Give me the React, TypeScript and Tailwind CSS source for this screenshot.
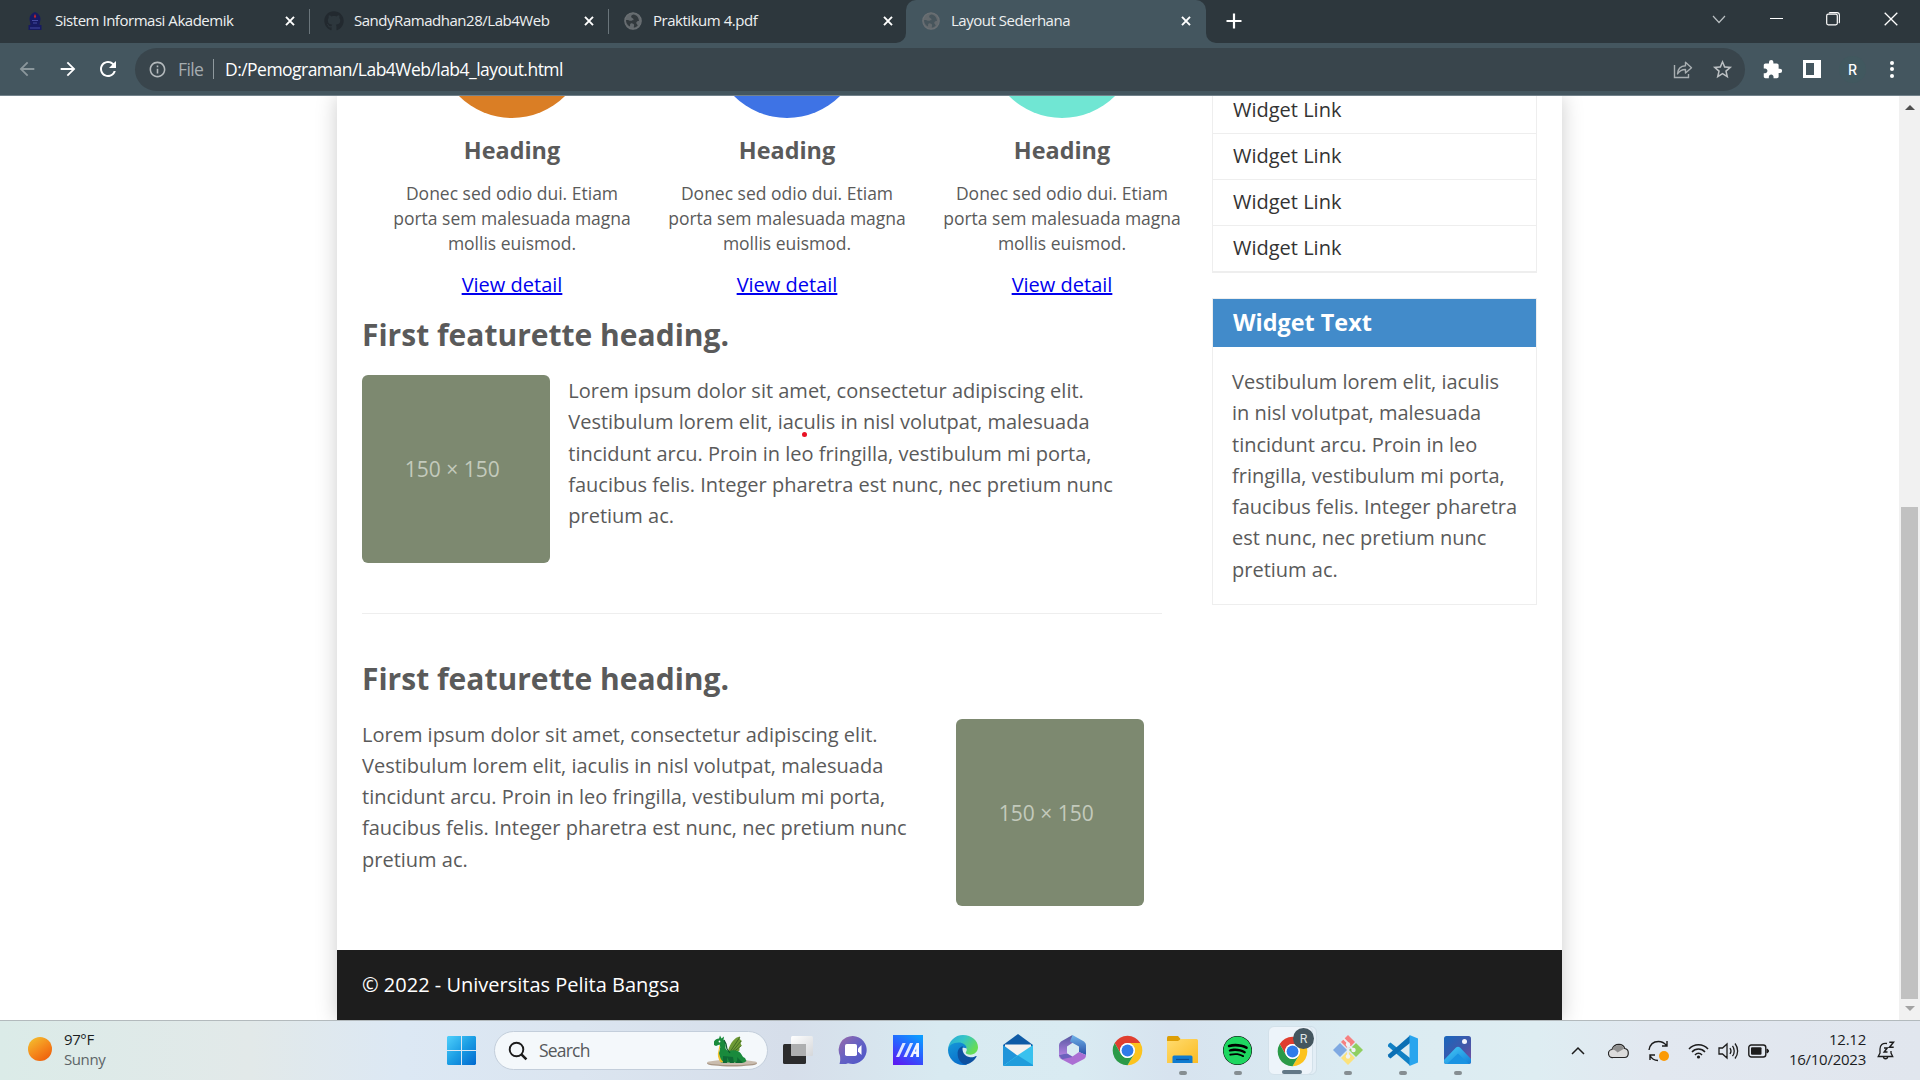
import React from "react";
import { MdExtension, MdStarBorder, MdInfoOutline, MdRefresh, MdArrowBack, MdArrowForward } from "react-icons/md";
import { FaGithub, FaSpotify } from "react-icons/fa";

const LOREM =
  "Lorem ipsum dolor sit amet, consectetur adipiscing elit. Vestibulum lorem elit, iaculis in nisl volutpat, malesuada tincidunt arcu. Proin in leo fringilla, vestibulum mi porta, faucibus felis. Integer pharetra est nunc, nec pretium nunc pretium ac.";

/* ---------- Browser chrome ---------- */

function Globe({ land }: { land: string }) {
  return (
    <svg className="h-[18px] w-[18px]" viewBox="0 0 18 18">
      <circle cx="9" cy="9" r="8.2" fill="#63696d" stroke="#6b7074" strokeWidth="1.2" />
      <path
        d="M9.5 2.5c-2 .3-2.6 1.6-2.2 2.8.4 1.1 2 .8 2.2 2 .2 1.3-1.2 1.5-2.7 1.4C5 8.6 3.500 7.600 2 8c0 3 1.500 5.500 4 6.600.2-1.300-.3-2.500.8-3.100 1.200-.6 3.100.3 3.300 1.600.1.900-.4 1.600-.3 2.500 1.400-.3 3-1.100 4-2.200-.5-1-1.700-1.500-1.500-2.900.2-1.200 1.400-1.700 2.700-1.600C14.800 5.500 12.500 2.800 9.500 2.500z"
        fill={land}
      />
    </svg>
  );
}

function Campus() {
  return (
    <svg className="h-5 w-4" viewBox="0 0 16 20">
      <path d="M8 1c3.500 1.500 5.500 4 5.500 7L12.500 14h2v5H1.500v-5h2L2.500 8C2.500 5 4.500 2.500 8 1z" fill="#171a62" />
      <path d="M8 3l1.200 2.500L8 7.500 6.800 5.500z" fill="#c3242c" />
      <path d="M5 9.500h6M6 12h4M3 17h10" stroke="#454aa0" strokeWidth="1" />
    </svg>
  );
}

function CloseX() {
  return (
    <svg className="h-[10px] w-[10px]" viewBox="0 0 10 10">
      <path d="M1 .8l8 8.400M9 .8L1 9.200" stroke="#fff" strokeWidth="1.900" />
    </svg>
  );
}

function Tab({ icon, title }: { icon: React.ReactNode; title: string }) {
  return (
    <>
      <span className="flex w-5 justify-center">{icon}</span>
      <span className="ml-[10px] flex-1 pb-[2px] text-[15px] tracking-[-0.47px] whitespace-nowrap text-[#eef0f1]">{title}</span>
      <CloseX />
    </>
  );
}

function TabStrip() {
  return (
    <div className="flex h-[43px] bg-[#2d373d] pl-[10px]">
      <div className="flex h-[42px] w-[299px] items-center pr-[14px] pl-[15px]">
        <Tab icon={<Campus />} title="Sistem Informasi Akademik" />
      </div>
      <div className="mt-[9px] h-[25px] w-px bg-[#6a757b]" />
      <div className="flex h-[42px] w-[298px] items-center pr-[14px] pl-[14px]">
        <Tab icon={<FaGithub className="h-5 w-5 text-[#22292f]" />} title="SandyRamadhan28/Lab4Web" />
      </div>
      <div className="mt-[9px] h-[25px] w-px bg-[#6a757b]" />
      <div className="flex h-[42px] w-[287px] items-center pr-[3px] pl-[14px]">
        <Tab icon={<Globe land="#32393d" />} title="Praktikum 4.pdf" />
      </div>
      <div className="flex w-[10px] items-end bg-[#44565f]">
        <div className="h-full w-[10px] rounded-br-[10px] bg-[#2d373d]" />
      </div>
      <div className="flex h-[43px] w-[300px] items-center rounded-t-[10px] bg-[#44565f] pr-[15px] pb-px pl-[15px]">
        <Tab icon={<Globe land="#47555c" />} title="Layout Sederhana" />
      </div>
      <div className="w-[10px] bg-[#44565f]">
        <div className="h-full w-[10px] rounded-bl-[10px] bg-[#2d373d]" />
      </div>
      <svg className="mt-[13px] ml-[10px] h-4 w-4" viewBox="0 0 16 16">
        <path d="M8 .5v15M.5 8h15" stroke="#fff" strokeWidth="2.200" />
      </svg>
      <div className="flex flex-1 items-center justify-end pr-[22px] pb-[6px]">
        <svg className="mr-[44px] h-[14px] w-[14px]" viewBox="0 0 14 14">
          <path d="M1 4l6 6.500L13 4" fill="none" stroke="#b9bfc2" strokeWidth="1.200" />
        </svg>
        <div className="mr-[43px] h-px w-[13px] bg-white" />
        <svg className="mr-[44px] h-[14px] w-[14px]" viewBox="0 0 14 14">
          <rect x=".7" y="2.200" width="10.600" height="10.600" rx="1.500" fill="none" stroke="#fff" strokeWidth="1.200" />
          <path d="M3 1c.3-.3.700-.4 1.200-.4H11c1.400 0 2.400 1 2.400 2.400V10c0 .5-.2.900-.5 1.200" fill="none" stroke="#fff" strokeWidth="1.100" />
        </svg>
        <svg className="h-[14px] w-[14px]" viewBox="0 0 14 14">
          <path d="M.7.7l12.600 12.600M13.300.7L.7 13.300" stroke="#fff" strokeWidth="1.300" />
        </svg>
      </div>
    </div>
  );
}

function Toolbar() {
  return (
    <div className="flex h-[53px] items-center border-b border-[#72828b] bg-[#44565f] text-white">
      <MdArrowBack className="ml-[16px] h-[22px] w-[22px] text-[#8b979c]" />
      <MdArrowForward className="ml-[19px] h-[22px] w-[22px]" />
      <MdRefresh className="ml-[17px] h-6 w-6" />
      <div className="ml-[15px] flex h-[43px] w-[1610px] items-center rounded-full bg-[#39454c] pl-[13px] text-[17.5px]">
        <MdInfoOutline className="h-[19px] w-[19px] text-[#b4babd]" />
        <span className="ml-[11px] w-[35px] tracking-[-0.6px] text-[#a5acb0]">File</span>
        <div className="h-5 w-px bg-[#8f999e]" />
        <span className="ml-[11px] tracking-[-0.53px]">D:/Pemograman/Lab4Web/lab4_layout.html</span>
        <svg className="mr-[18px] ml-auto h-5 w-5" viewBox="0 0 20 20" fill="none" stroke="#a9afb2" strokeWidth="1.400">
          <path d="M1.500 6v12.500h14V15" />
          <path d="M4.500 15c.3-5 3-8 8-8.200V3.200l6 5.500-6 5.300v-3.500c-3.500 0-6 1.200-8 4.500z" strokeLinejoin="round" />
        </svg>
        <MdStarBorder className="mr-[11px] h-[23px] w-[23px] text-[#bcc0c3]" />
      </div>
      <MdExtension className="ml-[17px] h-[21px] w-[21px]" />
      <div className="ml-[20px] flex h-[18px] w-[18px] justify-end border-[3px] border-white">
        <div className="h-full w-[4px] bg-white" />
      </div>
      <div className="ml-[18px] flex h-[27px] w-[27px] items-center justify-center rounded-full bg-[#41585f] text-[14px] font-medium [font-family:Inter,sans-serif]">R</div>
      <div className="ml-[24px] flex flex-col gap-[2.500px]">
        <i className="h-1 w-1 rounded-full bg-white" />
        <i className="h-1 w-1 rounded-full bg-white" />
        <i className="h-1 w-1 rounded-full bg-white" />
      </div>
    </div>
  );
}

/* ---------- Page ---------- */

function Column({ disc }: { disc: string }) {
  return (
    <div className="flex w-[250px] shrink-0 flex-col items-center text-center">
      <div className={"-mt-[128px] h-[150px] w-[150px] shrink-0 rounded-full " + disc} />
      <h3 className="mt-[17px] h-[31px] text-[23.4px] leading-[31px] font-bold">Heading</h3>
      <p className="mt-[15px] text-[17.5px] leading-[25px]">Donec sed odio dui. Etiam porta sem malesuada magna mollis euismod.</p>
      <a className="mt-[13px] h-[31px] leading-[31px] text-[#0000ee] underline">View detail</a>
    </div>
  );
}

function Placeholder() {
  return (
    <div className="flex h-[187.5px] w-[187.5px] shrink-0 items-center justify-center rounded-[6px] bg-[#7d8970] pt-[2px] pr-[7px] text-[21px] text-[#c3cabc]">
      150 × 150
    </div>
  );
}

function Page() {
  return (
    <div className="flex h-[924px] overflow-hidden bg-white">
      <div className="flex flex-1 justify-center overflow-hidden">
        <div className="flex w-[1225px] flex-col bg-white text-[20px] text-[#5a5a5a] shadow-[0_0_20px_#ccc]">
          <div className="flex h-[854px] overflow-hidden pl-[25px]">
            <div className="flex w-[800px] shrink-0 flex-col">
              <div className="flex gap-[25px] pl-[25px]">
                <Column disc="bg-[#da7e25]" />
                <Column disc="bg-[#3e73e5]" />
                <Column disc="bg-[#70e6d3]" />
              </div>
              <h2 className="mt-[15px] h-10 text-[30px] leading-10 font-bold">First featurette heading.</h2>
              <div className="relative mt-[20px] flex gap-[18.75px]">
                <Placeholder />
                <p className="w-[580px] leading-[31.25px]">{LOREM}</p>
                <i className="absolute top-[57px] left-[440px] h-[5px] w-[5px] rounded-full bg-[#e81224]" />
              </div>
              <div className="mt-[50.5px] h-px shrink-0 bg-[#eee]" />
              <h2 className="mt-[45px] h-10 text-[30px] leading-10 font-bold">First featurette heading.</h2>
              <div className="mt-[19.6px] flex">
                <p className="w-[594px] leading-[31.25px]">{LOREM}</p>
                <Placeholder />
              </div>
            </div>
            <div className="ml-[50px] flex w-[325px] shrink-0 flex-col">
              <div className="-mt-[9px] border border-b-2 border-[#eee] text-[#333]">
                {[0, 1, 2, 3].map((i) => (
                  <div key={i} className="h-[46px] border-b border-[#eee] pl-[20px] leading-[43px] last:h-[45px] last:border-b-0">
                    Widget Link
                  </div>
                ))}
              </div>
              <div className="mt-[25px] h-[307px] border border-[#eee]">
                <h3 className="h-[48px] bg-[#428bca] pl-[20px] text-[23.4px] leading-[47px] font-bold text-white">Widget Text</h3>
                <p className="mt-[19px] w-[305px] pl-[19px] leading-[31.25px]">
                  {LOREM.slice(LOREM.indexOf("Vestibulum"))}
                </p>
              </div>
            </div>
          </div>
          <div className="h-[70px] bg-[#1d1d1d] pl-[25px] leading-[70px] text-white">© 2022 - Universitas Pelita Bangsa</div>
        </div>
      </div>
      <div className="flex w-[21px] flex-col items-center bg-[#f1f1f1]">
        <div className="mt-[9px] border-x-[5px] border-b-[5px] border-x-transparent border-b-[#505050]" />
        <div className="mt-[397px] h-[492px] w-[17px] bg-[#c1c1c1]" />
        <div className="mt-[7px] border-x-[5px] border-t-[5px] border-x-transparent border-t-[#a3a3a3]" />
      </div>
    </div>
  );
}

/* ---------- Taskbar ---------- */

function WindowsLogo() {
  return (
    <svg className="h-[29px] w-[29px]" viewBox="0 0 29 29">
      <defs>
        <linearGradient id="win" x1="0" y1="0" x2="1" y2="1">
          <stop offset="0" stopColor="#4fd0fb" />
          <stop offset=".5" stopColor="#1b9de4" />
          <stop offset="1" stopColor="#0169cf" />
        </linearGradient>
      </defs>
      <path d="M1 0h13v14H0V1zM15 0h13l1 1v13H15zM0 15h14v14H1l-1-1zM15 15h14v13l-1 1H15z" fill="url(#win)" />
    </svg>
  );
}

function Dragon() {
  return (
    <svg className="h-[32px] w-[52px]" viewBox="0 0 52 32">
      <ellipse cx="26" cy="28.500" rx="25" ry="3" fill="#a79584" />
      <ellipse cx="26" cy="27.500" rx="25" ry="2.600" fill="#c9bcae" />
      <path d="M22 16C24 8 29 2 34 1.500c-1 2 0 3 2 4.500-2 1.500-1.500 3 0 5-2 0-3 1.500-2.500 4.500L26 20z" fill="#6f9a35" />
      <path d="M24 17L34 2M25 18l10-12M26 18l9-7" stroke="#33601f" strokeWidth=".8" />
      <path d="M8 6.500c1-2 3-3 5-3l1-3 1.500 3 2.500-2-.5 3.500c2 2 2.500 4.500 2 7.500 0 2 1 3 3.500 3.500 4-1.500 9-1 11.500 2 2 2.300 2 4.500 4.500 5l1.500 3c-2 2-5 2-8 1.500H15c-1.500-4-3-8-1.500-12 .8-2 1-4 0-6L10 11 8 10z" fill="#198a3c" />
      <path d="M13.500 10c2 3-1.500 6 0 10 .7 3 1.500 5 4 7l-3 .5c-2.500-4-3.500-8-2-12z" fill="#f1c12c" />
      <path d="M17 21v7h4v-6l3 6h4l-1-6M31 22c1 3 0 4-2 6h8" fill="#0e6b34" />
      <circle cx="13.500" cy="6.500" r=".9" fill="#fff" />
      <path d="M18 5l2 4 1 5 3 4" stroke="#0c5a2b" strokeWidth="1.200" fill="none" />
    </svg>
  );
}

function TaskView() {
  return (
    <svg className="h-[30px] w-[30px]" viewBox="0 0 30 30">
      <defs>
        <linearGradient id="tv" x1="0" y1="0" x2="1" y2="1">
          <stop offset="0" stopColor="#fff" />
          <stop offset="1" stopColor="#d5d7da" />
        </linearGradient>
      </defs>
      <rect x="0" y="9" width="23" height="20" rx="1.500" fill="#2c2c2d" />
      <rect x="8" y="1" width="22" height="20" rx="1.500" fill="url(#tv)" />
      <path d="M8 9h15v12H9.500L8 19.500z" fill="#aeafb0" />
    </svg>
  );
}

function Meet() {
  return (
    <svg className="h-[30px] w-[30px]" viewBox="0 0 30 30">
      <defs>
        <linearGradient id="mt" x1="0" y1="0" x2="1" y2="1">
          <stop offset="0" stopColor="#9c6aa8" />
          <stop offset=".5" stopColor="#6461c4" />
          <stop offset="1" stopColor="#4d55c9" />
        </linearGradient>
      </defs>
      <path d="M15 1a14 14 0 1 1-5 27.200c-2 .9-5 1-8.500.8C2 27 2.500 25.500 2 21A14 14 0 0 1 15 1z" fill="url(#mt)" />
      <rect x="7" y="9" width="12" height="12" rx="1.800" fill="#fff" />
      <path d="M20 13.500l3.500-3.500v10L20 16.500z" fill="#fff" />
    </svg>
  );
}

function MyAsus() {
  return (
    <svg className="h-[30px] w-[30px]" viewBox="0 0 30 30">
      <defs>
        <linearGradient id="ma" x1="0.800" y1="0" x2="0.200" y2="1">
          <stop offset="0" stopColor="#0d9bff" />
          <stop offset=".5" stopColor="#2b5cff" />
          <stop offset="1" stopColor="#5a1cf2" />
        </linearGradient>
      </defs>
      <rect width="30" height="30" fill="url(#ma)" />
      <path d="M3 22L9.500 8h3.200L6.200 22zM10.500 22L17 8h3.200l-6.500 14z" fill="#dfe6ff" />
      <path d="M17 22l6.500-14H26v14h-2.800v-3h-2.300L19.800 22zM22 16.500h1.200V13.500z" fill="#f2f4ff" fillRule="evenodd" />
    </svg>
  );
}

function Edge() {
  return (
    <svg className="h-[30px] w-[30px]" viewBox="0 0 24 24">
      <defs>
        <linearGradient id="eg" x1="0" y1="0" x2="1" y2=".5">
          <stop offset="0" stopColor="#25a6dd" />
          <stop offset=".5" stopColor="#35c5c6" />
          <stop offset="1" stopColor="#66dc55" />
        </linearGradient>
        <linearGradient id="eb" x1="0" y1="0" x2=".5" y2="1">
          <stop offset="0" stopColor="#1598d8" />
          <stop offset="1" stopColor="#0a6fcb" />
        </linearGradient>
      </defs>
      <path d="M0 11.500C.5 5 5.500 0 12 0c7 0 12 4.500 12 9.800 0 3.500-2.800 5.900-6 5.900-2.500 0-3.800-.9-3.800-1.600 0-.6.8-1 .8-2.500C15 9 12.500 7 9.500 7 5 7 1 8.500 0 11.500z" fill="url(#eg)" />
      <path d="M0 12c0-3.500 4-6 8.500-6 3.500 0 6.200 2 6.500 4.800C11.500 9 8.500 11 8.500 15c0 4.300 3 7.500 7 8.500-1.100.3-2.300.5-3.500.5C5.400 24 0 18.600 0 12z" fill="url(#eb)" />
      <path d="M7.700 15c0-3.200 1.600-5.400 4.200-6-1.200 4 1.300 8.300 5.800 8.800 2 .2 3.400-.3 4.600-1 .4-.2.8.2.5.6-2 3.400-5.300 5.900-9 6.100C10.200 22.800 7.700 19.500 7.700 15z" fill="#0d50a0" />
    </svg>
  );
}

function Mail() {
  return (
    <svg className="h-[32px] w-[30px]" viewBox="0 0 30 32">
      <path d="M0 11L15 0l15 11v4H0z" fill="#0f5ba6" />
      <path d="M2 10.500h26V22H2z" fill="#f4f3f1" />
      <path d="M0 11l15 11L0 32z" fill="#2095da" />
      <path d="M30 11L15 21 0 32h30z" fill="#39c1ee" />
      <path d="M15 21.500L30 31v1H0z" fill="#1f9ddc" />
    </svg>
  );
}

function Office() {
  return (
    <svg className="h-[32px] w-[27px]" viewBox="0 0 27 32">
      <defs>
        <linearGradient id="oa" x1="0" y1="0" x2="0" y2="1">
          <stop offset="0" stopColor="#54589f" />
          <stop offset="1" stopColor="#ae80df" />
        </linearGradient>
        <linearGradient id="ob" x1="0" y1="0" x2="0" y2="1">
          <stop offset="0" stopColor="#6fb3ea" />
          <stop offset="1" stopColor="#2b51a8" />
        </linearGradient>
      </defs>
      <path d="M13.500 1L2 7.500Q0 9 0 11v10l8-1.500V12.500l6-4z" fill="url(#oa)" />
      <path d="M13.500 1L25 7.500q2 1.500 2 3.500v10l-7-3v-5.500L11 7.500z" fill="url(#ob)" />
      <path d="M0 21c0 2 1 3.500 3 4.500l10.500 5.500L25 25c1.500-1 2-2.300 2-4l-7-3-6.500 4.500L8 19.500z" fill="#ab6fd3" />
      <path d="M0 21l8-1.500 5.500 3.500L3 25.300z" fill="#6b62bd" />
    </svg>
  );
}

function Chrome() {
  return (
    <svg className="h-[31px] w-[31px]" viewBox="1 1 46 46">
      <path d="M4.950 13A22 22 0 0 1 43.050 13L24 13A11 11 0 0 0 14.470 29.500Z" fill="#e03e2f" />
      <path d="M43.050 13A22 22 0 0 1 24 46L33.530 29.500A11 11 0 0 0 24 13Z" fill="#fcc31e" />
      <path d="M24 46A22 22 0 0 1 4.950 13L14.470 29.500A11 11 0 0 0 33.530 29.500Z" fill="#2b9a48" />
      <circle cx="24" cy="24" r="11" fill="#fff" />
      <circle cx="24" cy="24" r="8.800" fill="#2f7be9" />
    </svg>
  );
}

function Folder() {
  return (
    <svg className="h-[28px] w-[31px]" viewBox="0 0 31 28">
      <defs>
        <linearGradient id="fo" x1="0" y1="0" x2="1" y2="1">
          <stop offset="0" stopColor="#ffdc70" />
          <stop offset="1" stopColor="#fbbb22" />
        </linearGradient>
      </defs>
      <path d="M0 1.500Q0 0 1.500 0H11l2.500 3v4H0z" fill="#dd9e06" />
      <path d="M0 5h11l3-2h15.500q1.500 0 1.500 1.500V27H0z" fill="url(#fo)" />
      <path d="M5.500 27v-6q0-1.500 1.500-1.500h17q1.500 0 1.500 1.500v6z" fill="#0f7bd0" />
      <path d="M9 23.500h13" stroke="#0a4f94" strokeWidth="1.200" />
    </svg>
  );
}

function Git() {
  return (
    <svg className="h-[32px] w-[32px]" viewBox="0 0 32 32">
      <path d="M16 1l7 7-7 7-7-7z" fill="#f68080" />
      <path d="M24 9l7 7-7 7-7-7z" fill="#8fcf5f" />
      <path d="M16 17l7 7-7 7-7-7z" fill="#fbe27c" />
      <path d="M8 9l7 7-7 7-7-7z" fill="#7fa9e2" />
      <path d="M11 4l5 5v15M16 11l6 5" stroke="#e9eef2" strokeWidth="1.800" fill="none" />
      <circle cx="16" cy="10.500" r="2.200" fill="#eef2f5" />
      <circle cx="16" cy="22.500" r="2.200" fill="#eef2f5" />
      <circle cx="21.500" cy="16" r="2.200" fill="#eef2f5" />
    </svg>
  );
}

function VsCode() {
  return (
    <svg className="h-[31px] w-[31px]" viewBox="0 0 31 31">
      <path d="M1.500 9L3.500 7.500 23 23v7.500L1.200 11.500Q.5 10 1.500 9z" fill="#1180c4" />
      <path d="M1.500 22L3.500 23.500 23 8V.5L1.200 19.500Q.5 21 1.500 22z" fill="#0b6fb4" />
      <path d="M22.500 0L31 3.500v24L22.500 31z" fill="#2aa5ee" />
    </svg>
  );
}

function Photos() {
  return (
    <svg className="h-[28px] w-[27px]" viewBox="0 0 27 28">
      <defs>
        <linearGradient id="ph" x1="0" y1="0" x2="1" y2="1">
          <stop offset="0" stopColor="#1867bd" />
          <stop offset=".6" stopColor="#4556a8" />
          <stop offset="1" stopColor="#7d4fa0" />
        </linearGradient>
        <linearGradient id="pm" x1="0" y1="0" x2="1" y2="1">
          <stop offset="0" stopColor="#46cdf8" />
          <stop offset="1" stopColor="#1380d8" />
        </linearGradient>
      </defs>
      <rect width="27" height="28" rx="2.500" fill="url(#ph)" />
      <path d="M0 24L12 11.500q2-1.500 4 0L27 23v2.500Q27 28 24.500 28h-22Q0 28 0 25.500z" fill="url(#pm)" />
      <path d="M3 28L14 17.500 25 28z" fill="#1a93e2" />
      <circle cx="20.500" cy="5.500" r="2.500" fill="#f3f4fb" />
    </svg>
  );
}

function AppCell({ children, open }: { children: React.ReactNode; open?: boolean }) {
  return (
    <div className="flex h-[59px] w-[55px] flex-col items-center">
      <div className="flex h-[49px] items-center pt-[9px]">{children}</div>
      {open && <div className="mt-px h-1 w-2 rounded-full bg-[#868e92]" />}
    </div>
  );
}

function Taskbar() {
  return (
    <div className="flex h-[60px] items-center border-t border-[#b3babd] bg-[linear-gradient(90deg,#dbebe8_0%,#e2e9e9_13%,#dce8f4_21%,#dbe5f0_30%,#d6deea_41%,#d8eaf1_49%,#d9ebf2_56%,#d7e3ef_61%,#daebf2_70%,#deedf2_80%,#e2e8f0_86%,#e1e6ee_100%)] text-[15px] text-[#1b1d1f]">
      <div className="mb-[3px] ml-[28px] h-6 w-6 rounded-full bg-[linear-gradient(145deg,#f3c02f_5%,#f58a1c_50%,#ee5f0c_90%)]" />
      <div className="mb-[4px] ml-[12px] w-[383px] leading-[20px] tracking-[-0.4px]">
        <div>97°F</div>
        <div className="text-[#5c6467]">Sunny</div>
      </div>
      <WindowsLogo />
      <div className="ml-[18px] flex h-[39px] w-[274px] items-center rounded-full border border-[#c3cedb] bg-[#f4f8fb] pr-[9px] pl-[13px]">
        <svg className="h-5 w-5" viewBox="0 0 20 20" fill="none" stroke="#1c1c1c">
          <circle cx="8.500" cy="8.500" r="6.800" strokeWidth="1.900" />
          <path d="M13.400 13.400l5 5" strokeWidth="2.600" />
        </svg>
        <span className="mr-auto ml-[11px] text-[17.5px] tracking-[-0.8px] text-[#56595c]">Search</span>
        <Dragon />
      </div>
      <div className="ml-[2px] flex">
        <AppCell><TaskView /></AppCell>
        <AppCell><Meet /></AppCell>
        <AppCell><MyAsus /></AppCell>
        <AppCell><Edge /></AppCell>
        <AppCell><Mail /></AppCell>
        <AppCell><Office /></AppCell>
        <AppCell><Chrome /></AppCell>
        <AppCell open><Folder /></AppCell>
        <AppCell open><FaSpotify className="h-[29px] w-[29px] rounded-full bg-black text-[#1ed760]" /></AppCell>
        <div className="relative flex h-[59px] w-[55px] flex-col items-center">
          <div className="absolute top-[5px] left-[7px] h-[49px] w-[45px] rounded-[6px] border border-[#cfdfe8] bg-[#e3eef6]" />
          <div className="absolute top-[5px] left-[3px] flex h-[49px] w-[45px] flex-col items-center rounded-[6px] border border-[#d3e1ea] bg-[#edf4fa]">
            <div className="flex h-[43px] items-center pt-[5px] pl-[3px]"><Chrome /></div>
            <div className="ml-[3px] h-1 w-5 rounded-full bg-[#627887]" />
          </div>
          <div className="absolute top-[7px] left-[28px] flex h-[21px] w-[21px] items-center justify-center rounded-full bg-[#44565f] text-[12px] text-[#dfe4e7] [font-family:Inter,sans-serif]">R</div>
        </div>
        <AppCell open><Git /></AppCell>
        <AppCell open><VsCode /></AppCell>
        <AppCell open><Photos /></AppCell>
      </div>
      <div className="mr-[25px] ml-auto flex items-center">
        <svg className="h-[14px] w-[14px]" viewBox="0 0 14 14">
          <path d="M1 10l6-6 6 6" fill="none" stroke="#1c1c1c" strokeWidth="1.500" />
        </svg>
        <svg className="ml-[23px] h-[16px] w-[21px]" viewBox="0 0 21 16">
          <path d="M5 14.500a4 4 0 0 1-1-8C5 3 8 1.300 11 1.300c3 0 5 1.700 5.700 4.200 2.200.3 3.600 2 3.600 4.500s-1.500 4.500-3.800 4.500z" fill="#dcdcdc" stroke="#262626" strokeWidth="1.200" />
          <path d="M4 6.500C5.500 3.500 8 2 11 2c2.500 0 4.500 1.500 5 3.800L9.500 9.500C8 7.500 6 6.500 4 6.500z" fill="#8f8f8f" />
        </svg>
        <svg className="ml-[19px] h-[22px] w-[22px]" viewBox="0 0 22 22" fill="none" stroke="#1c1c1c" strokeWidth="1.400">
          <path d="M1 10C2 4 6 1.500 10.500 1.500c3.500 0 6 1.500 8 4M19 1v5h-5M2 20v-5h5M2 15.500c1.500 3 4 5 8 5" />
          <circle cx="16" cy="16" r="5" fill="#fb9a05" stroke="none" />
        </svg>
        <svg className="ml-[18px] h-[16px] w-[21px]" viewBox="0 0 21 16" fill="none" stroke="#1c1c1c" strokeWidth="1.500">
          <path d="M1 6C6 .2 15 .2 20 6M4 9c3.500-4 9.500-4 13 0M7 12c2-2.300 5-2.300 7 0" />
          <circle cx="10.500" cy="14" r="1.600" fill="#1c1c1c" stroke="none" />
        </svg>
        <svg className="ml-[9px] h-[18px] w-[21px]" viewBox="0 0 21 18" fill="none" stroke="#1c1c1c" strokeWidth="1.300">
          <path d="M1 6h3.500L9 2v14l-4.500-4H1zM12 6c1.200 1.800 1.200 4.200 0 6M14.500 3.800c2.300 3 2.300 7.400 0 10.400M17 1.500c3.500 4.500 3.500 10.500 0 15" />
        </svg>
        <svg className="ml-[9px] h-[14px] w-[21px]" viewBox="0 0 21 14">
          <rect x=".8" y="1" width="17" height="12" rx="2.500" fill="none" stroke="#1c1c1c" strokeWidth="1.400" />
          <rect x="3" y="3.200" width="10.500" height="7.600" rx="1" fill="#1c1c1c" />
          <path d="M19 5q1.500.5 1.500 2T19 9z" fill="#1c1c1c" stroke="#1c1c1c" />
        </svg>
        <div className="mb-[4px] w-[97px] text-right leading-[20px] tracking-[-0.25px] whitespace-nowrap">
          <div>12.12</div>
          <div>16/10/2023</div>
        </div>
        <svg className="ml-[11px] h-[19px] w-[18px]" viewBox="0 0 18 19" fill="none" stroke="#1c1c1c" strokeWidth="1.300">
          <path d="M10 2.500C5.500 1.500 3 4.500 3 8v4l-1.800 3.500h14.500L14 12V10M6.300 15.500c.3 3 4.200 3 4.500 0" />
          <path d="M12.300 1.200H16.500l-4 5h4.200M7 7h3.200l-3 4h3.300" strokeWidth="1.500" />
        </svg>
      </div>
    </div>
  );
}

export default function App() {
  return (
    <div className="flex h-[1080px] w-[1920px] flex-col overflow-hidden [font-family:'Open_Sans','Noto_Sans',sans-serif]">
      <TabStrip />
      <Toolbar />
      <Page />
      <Taskbar />
    </div>
  );
}
